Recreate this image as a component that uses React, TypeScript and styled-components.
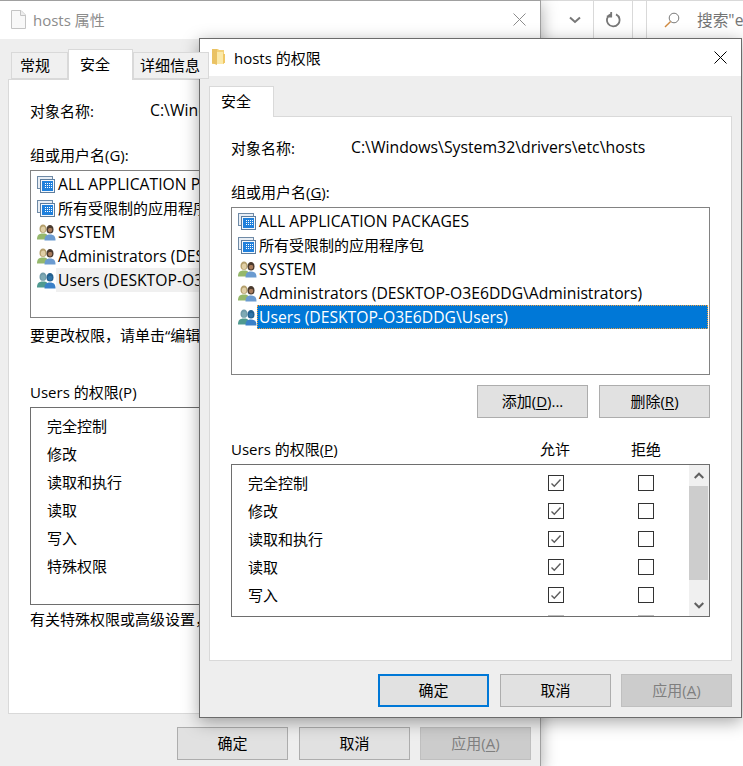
import React from "react";
import styled, { createGlobalStyle } from "styled-components";

const GlobalStyle = createGlobalStyle`
  html, body {
    margin: 0;
    padding: 0;
    background: #ffffff;
  }
  * {
    box-sizing: border-box;
  }
`;

const FONT = `"Open Sans", "Noto Sans CJK SC", sans-serif`;

const EDIT_NOTE = "要更改权限\uFF0C请单击“编辑”。";
const ADVANCED_NOTE = "有关特殊权限或高级设置\uFF0C请单击“高级”。";

const AppPackageIcon = () => (
  <svg width="19" height="17" viewBox="0 0 19 17">
    <rect x="0.5" y="0.5" width="15" height="12" fill="#e8eef5" stroke="#6f8aa6" />
    <rect x="3.5" y="3.5" width="14" height="13" fill="#f4f8fc" stroke="#5d7d9e" />
    <rect x="5" y="5" width="11" height="10" fill="#1f80dc" />
    <path d="M8 7h1v1H8zM10 7h1v1h-1zM12 7h1v1h-1zM14 7h1v1h-1zM8 9h1v1H8zM10 9h1v1h-1zM12 9h1v1h-1zM14 9h1v1h-1zM8 11h1v1H8zM10 11h1v1h-1zM12 11h1v1h-1zM14 11h1v1h-1z" fill="#ffffff" />
  </svg>
);

const UsersIcon = ({ dim }: { dim?: boolean }) => (
  <svg width="19" height="17" viewBox="0 0 19 17">
    <path d="M2.500 5c0-3 1.500-4.500 3.500-4.500S9.500 2 9.500 5 8 8.800 6 8.800 2.500 8 2.500 5z" fill={dim ? "#6f9aa8" : "#b49f6c"} />
    <path d="M3.800 5.500c0-2 1-3 2.400-3s2.200 1 2.200 3-1 2.600-2.300 2.600-2.300-.6-2.300-2.600z" fill={dim ? "#7faab4" : "#e0cfa6"} />
    <path d="M0 15.500c0-4 1.500-6 6-6 2.500 0 4 .6 5 2.500v3.500z" fill={dim ? "#4f9a90" : "#95b86c"} />
    <path d="M9.500 5.500c0-3 1.500-4.500 3.500-4.500s3.500 1.500 3.500 4.500-1.500 4-3.500 4-3.500-1-3.500-4z" fill={dim ? "#23608f" : "#4a3a2e"} />
    <path d="M11 6c0-1.500.8-2 2.200-2s2 .5 2 2-1 2.500-2.100 2.500S11 7.500 11 6z" fill={dim ? "#2f74a8" : "#a97c5c"} />
    <path d="M7.500 16.500c0-4 1.500-6 5.500-6s5.500 2 5.500 6z" fill={dim ? "#3a80c8" : "#6b9bd0"} />
  </svg>
);

const FolderIcon = () => (
  <svg width="13" height="16" viewBox="0 0 13 16">
    <path d="M0 0h6l1 1h5v14H0z" fill="#f3d27a" />
    <path d="M5 3h6v12H5z" fill="#fbe9a9" />
    <path d="M0 0h5v16L0 14z" fill="#eac263" />
    <path d="M11 5h2v9h-2z" fill="#f0c765" />
  </svg>
);

const FileIcon = () => (
  <svg width="15" height="19" viewBox="0 0 15 19">
    <path d="M0.500 0.500h9.500l4.500 4.500v13.500h-14z" fill="#f8f8f8" stroke="#c4c4c4" />
    <path d="M9.500 0.500v5h5" fill="#eeeeee" stroke="#c4c4c4" />
  </svg>
);

const CloseIcon = ({ color }: { color: string }) => (
  <svg width="13" height="13" viewBox="0 0 13 13">
    <path d="M0.500 0.500l12 12M12.500 0.500l-12 12" stroke={color} strokeWidth="1" fill="none" />
  </svg>
);

const ChevronIcon = ({ up }: { up?: boolean }) => (
  <svg width="10" height="7" viewBox="0 0 10 7">
    <path d={up ? "M0.700 6L5 1.700 9.300 6" : "M0.700 1L5 5.300 9.300 1"} stroke="#606060" strokeWidth="2" fill="none" />
  </svg>
);

const Check = () => (
  <svg width="12" height="10" viewBox="0 0 12 10">
    <path d="M1.500 5.500L4.300 8.300 10.500 1.500" stroke="#5c5c5c" strokeWidth="1.400" fill="none" />
  </svg>
);

const Desktop = styled.div`
  position: relative;
  width: 743px;
  height: 766px;
  overflow: hidden;
  background: #ffffff;
  font-family: ${FONT};
  font-size: 15px;
  color: #000000;
`;

const ExplorerBar = styled.div`
  position: absolute;
  left: 540px;
  top: 0;
  width: 203px;
  height: 38px;
  display: flex;
  align-items: stretch;
  border-top: 1px solid #d9d9d9;
  background: #ffffff;
`;

const BarButton = styled.div`
  width: 39px;
  display: flex;
  align-items: center;
  justify-content: center;
  border-right: 1px solid #d9d9d9;
  &:first-child {
    width: 54px;
    padding-left: 17px;
  }
`;

const SearchBox = styled.div`
  flex: 1;
  min-width: 0;
  margin-left: 13px;
  display: flex;
  align-items: center;
  gap: 17px;
  padding-left: 17px;
  border-left: 1px solid #d9d9d9;
  color: #747474;
  font-size: 15.700px;
  white-space: nowrap;
  overflow: hidden;
  svg {
    flex: none;
  }
`;

const Win = styled.div<{ $active?: boolean; $left: number; $top: number; $height: number }>`
  position: absolute;
  left: ${(p) => p.$left}px;
  top: ${(p) => p.$top}px;
  width: 543px;
  height: ${(p) => p.$height}px;
  display: flex;
  flex-direction: column;
  background: #eeeeee;
  border: 1px solid ${(p) => (p.$active ? "#6b6b6b" : "#a0a0a0")};
  box-shadow: 0 4px 16px rgba(0, 0, 0, 0.35);
`;

const TitleBar = styled.div<{ $active?: boolean }>`
  height: ${(p) => (p.$active ? 37 : 38)}px;
  flex: none;
  display: flex;
  align-items: center;
  background: #ffffff;
  padding-left: 12px;
  padding-right: 14px;
  padding-bottom: 1px;
  gap: ${(p) => (p.$active ? 9 : 7)}px;
  color: ${(p) => (p.$active ? "#000000" : "#8c8c8c")};
`;

const TitleText = styled.span`
  flex: 1;
`;

const TabRow = styled.div`
  height: 40px;
  flex: none;
  display: flex;
  align-items: flex-end;
  padding: 0 9px;
`;

const Tab = styled.div<{ $selected?: boolean; $width: number; $inset?: number; $pad: number }>`
  width: ${(p) => p.$width}px;
  height: ${(p) => (p.$selected ? 31 : 27)}px;
  margin-left: ${(p) => p.$inset ?? 0}px;
  margin-bottom: ${(p) => (p.$selected ? -1 : 0)}px;
  padding-left: ${(p) => p.$pad}px;
  padding-bottom: ${(p) => (p.$selected ? 4 : 2)}px;
  position: relative;
  z-index: 1;
  display: flex;
  align-items: center;
  background: ${(p) => (p.$selected ? "#ffffff" : "#f0f0f0")};
  border: 1px solid #d9d9d9;
  border-bottom: ${(p) => (p.$selected ? "none" : "1px solid #d9d9d9")};
  white-space: nowrap;
`;

const Panel = styled.div<{ $height: number }>`
  height: ${(p) => p.$height}px;
  flex: none;
  background: #ffffff;
  border: 1px solid #d9d9d9;
  margin: 0 9px;
  padding: 18px 21px 0;
  display: flex;
  flex-direction: column;
`;

const ObjectRow = styled.div`
  display: flex;
  height: 24px;
  align-items: center;
  white-space: nowrap;
`;

const ObjectLabel = styled.span`
  width: 120px;
  flex: none;
`;

const ObjectPath = styled.span`
  font-size: 15.800px;
`;

const Label = styled.div<{ $top: number }>`
  margin-top: ${(p) => p.$top}px;
  height: 22px;
  line-height: 22px;
  white-space: nowrap;
`;

const ListBox = styled.div<{ $height: number }>`
  height: ${(p) => p.$height}px;
  margin-top: 4px;
  border: 1px solid #828282;
  background: #ffffff;
  padding: 1px;
  display: flex;
  flex-direction: column;
`;

const ListItem = styled.div`
  height: 24px;
  flex: none;
  display: flex;
  align-items: center;
  padding-left: 5px;
  white-space: nowrap;
`;

const ItemText = styled.span<{ $selected?: boolean; $faded?: boolean; $latin?: boolean }>`
  flex: 1;
  height: 24px;
  line-height: 22px;
  padding-left: 1px;
  font-size: ${(p) => (p.$latin ? 15.7 : 15)}px;
  background: ${(p) => (p.$selected ? "#0078d7" : p.$faded ? "#f0f0f0" : "transparent")};
  color: ${(p) => (p.$selected ? "#ffffff" : "#000000")};
  border: 1px dotted ${(p) => (p.$selected ? "#f0a040" : "transparent")};
`;

const ListActions = styled.div`
  display: flex;
  justify-content: flex-end;
  gap: 11px;
  margin-top: 10px;
`;

const Button = styled.div<{ $default?: boolean; $disabled?: boolean }>`
  width: 111px;
  height: 33px;
  flex: none;
  display: flex;
  align-items: center;
  justify-content: center;
  padding-bottom: 2px;
  background: ${(p) => (p.$disabled ? "#cccccc" : "#e1e1e1")};
  border: ${(p) => (p.$default ? "2px solid #0078d7" : p.$disabled ? "1px solid #bfbfbf" : "1px solid #adadad")};
  color: ${(p) => (p.$disabled ? "#7f7f7f" : "#000000")};
  white-space: nowrap;
  u {
    text-underline-offset: 2px;
  }
`;

const PermHeader = styled.div`
  display: grid;
  grid-template-columns: 1fr 90px 92px 18px;
  margin-top: 20px;
  height: 22px;
  line-height: 22px;
`;

const PermColumn = styled.span`
  text-align: center;
`;

const PermBox = styled.div<{ $height: number; $top: number }>`
  height: ${(p) => p.$height}px;
  margin-top: ${(p) => p.$top}px;
  border: 1px solid #6e6e6e;
  background: #ffffff;
  display: flex;
  overflow: hidden;
`;

const PermRows = styled.div`
  flex: 1;
  padding-top: 4px;
  overflow: hidden;
`;

const PermRow = styled.div`
  height: 28px;
  display: grid;
  grid-template-columns: 1fr 90px 90px;
  align-items: center;
  padding-left: 16px;
  white-space: nowrap;
`;

const PermName = styled.span`
  padding-bottom: 2px;
`;

const CheckCell = styled.span`
  display: flex;
  justify-content: center;
  padding-left: 4px;
`;

const CheckBox = styled.span<{ $disabled?: boolean }>`
  width: 16px;
  height: 16px;
  display: flex;
  align-items: center;
  justify-content: center;
  background: #ffffff;
  border: 1px solid ${(p) => (p.$disabled ? "#bdbdbd" : "#333333")};
`;

const ScrollBar = styled.div`
  width: 20px;
  flex: none;
  background: #f0f0f0;
  display: flex;
  flex-direction: column;
`;

const ScrollArrow = styled.div`
  height: 21px;
  flex: none;
  display: flex;
  align-items: center;
  justify-content: center;
`;

const ScrollThumb = styled.div`
  width: 19px;
  height: 94px;
  flex: none;
  background: #cdcdcd;
`;

const ScrollTrack = styled.div`
  flex: 1;
`;

const Footer = styled.div`
  display: flex;
  justify-content: flex-end;
  gap: 11px;
  padding: 13px 9px 0 0;
  & > :last-child {
    margin-left: -1px;
  }
`;

const principals = [
  { name: "ALL APPLICATION PACKAGES", app: true, latin: true },
  { name: "所有受限制的应用程序包", app: true },
  { name: "SYSTEM", latin: true },
  { name: "Administrators (DESKTOP-O3E6DDG\\Administrators)", latin: true },
  { name: "Users (DESKTOP-O3E6DDG\\Users)", dim: true, current: true, latin: true },
];

const perms = ["完全控制", "修改", "读取和执行", "读取", "写入", "特殊权限"];

const PrincipalList = ({ active, height }: { active?: boolean; height: number }) => (
  <ListBox $height={height}>
    {principals.map((p) => (
      <ListItem key={p.name}>
        {p.app ? <AppPackageIcon /> : <UsersIcon dim={p.dim} />}
        <ItemText $selected={active && p.current} $faded={!active && p.current} $latin={p.latin}>
          {p.name}
        </ItemText>
      </ListItem>
    ))}
  </ListBox>
);

export default function App() {
  return (
    <>
      <GlobalStyle />
      <Desktop>
        <ExplorerBar>
          <BarButton>
            <svg width="12" height="8" viewBox="0 0 12 8">
              <path d="M1 1.500L6 6 11 1.500" stroke="#777777" strokeWidth="2" fill="none" />
            </svg>
          </BarButton>
          <BarButton>
            <svg width="16" height="16" viewBox="0 0 16 16">
              <path d="M6 2.200A6.300 6.300 0 1 0 11 2.400M6.200 0v4.500H1.800" stroke="#777777" strokeWidth="1.800" fill="none" />
            </svg>
          </BarButton>
          <SearchBox>
            <svg width="16" height="16" viewBox="0 0 16 16">
              <circle cx="10" cy="6" r="4.800" stroke="#7a7a7a" fill="none" />
              <path d="M6.600 9.400L1 15" stroke="#d08a40" strokeWidth="1.400" />
            </svg>
            搜索"etc"
          </SearchBox>
        </ExplorerBar>

        <Win $left={-2} $top={0} $height={768}>
          <TitleBar>
            <FileIcon />
            <TitleText>hosts 属性</TitleText>
            <CloseIcon color="#8c8c8c" />
          </TitleBar>
          <TabRow>
            <Tab $width={57} $inset={3} $pad={8}>
              常规
            </Tab>
            <Tab $width={65} $selected $pad={11}>
              安全
            </Tab>
            <Tab $width={76} $pad={6}>
              详细信息
            </Tab>
          </TabRow>
          <Panel $height={635}>
            <ObjectRow>
              <ObjectLabel>对象名称:</ObjectLabel>
              <ObjectPath>C:\Windows\System32\drivers\etc\hosts</ObjectPath>
            </ObjectRow>
            <Label $top={22}>组或用户名(G):</Label>
            <PrincipalList height={148} />
            <Label $top={6}>{EDIT_NOTE}</Label>
            <Label $top={35}>Users 的权限(P)</Label>
            <PermBox $height={198} $top={4}>
              <PermRows>
                {perms.map((perm) => (
                  <PermRow key={perm}>
                    <PermName>{perm}</PermName>
                  </PermRow>
                ))}
              </PermRows>
            </PermBox>
            <Label $top={3}>{ADVANCED_NOTE}</Label>
          </Panel>
          <Footer>
            <Button>确定</Button>
            <Button>取消</Button>
            <Button $disabled>
              应用(<u>A</u>)
            </Button>
          </Footer>
        </Win>

        <Win $active $left={199} $top={38} $height={680}>
          <TitleBar $active>
            <FolderIcon />
            <TitleText>hosts 的权限</TitleText>
            <CloseIcon color="#000000" />
          </TitleBar>
          <TabRow>
            <Tab $width={65} $selected $pad={11}>
              安全
            </Tab>
          </TabRow>
          <Panel $height={545}>
            <ObjectRow>
              <ObjectLabel>对象名称:</ObjectLabel>
              <ObjectPath>C:\Windows\System32\drivers\etc\hosts</ObjectPath>
            </ObjectRow>
            <Label $top={22}>
              组或用户名(<u>G</u>):
            </Label>
            <PrincipalList active height={168} />
            <ListActions>
              <Button>
                添加(<u>D</u>)...
              </Button>
              <Button>
                删除(<u>R</u>)
              </Button>
            </ListActions>
            <PermHeader>
              <span>
                Users 的权限(<u>P</u>)
              </span>
              <PermColumn>允许</PermColumn>
              <PermColumn>拒绝</PermColumn>
            </PermHeader>
            <PermBox $height={153} $top={4}>
              <PermRows>
                {perms.map((perm, i) => (
                  <PermRow key={perm}>
                    <PermName>{perm}</PermName>
                    <CheckCell>
                      <CheckBox $disabled={i === 5}>{i < 5 && <Check />}</CheckBox>
                    </CheckCell>
                    <CheckCell>
                      <CheckBox $disabled={i === 5} />
                    </CheckCell>
                  </PermRow>
                ))}
              </PermRows>
              <ScrollBar>
                <ScrollArrow>
                  <ChevronIcon up />
                </ScrollArrow>
                <ScrollThumb />
                <ScrollTrack />
                <ScrollArrow>
                  <ChevronIcon />
                </ScrollArrow>
              </ScrollBar>
            </PermBox>
          </Panel>
          <Footer>
            <Button $default>确定</Button>
            <Button>取消</Button>
            <Button $disabled>
              应用(<u>A</u>)
            </Button>
          </Footer>
        </Win>
      </Desktop>
    </>
  );
}
